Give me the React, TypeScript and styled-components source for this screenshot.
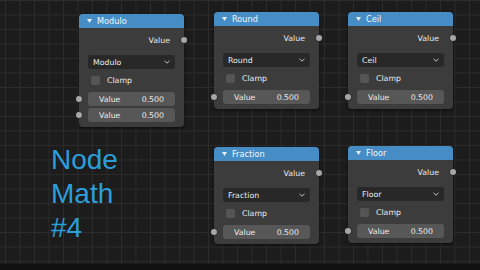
import React from "react";
import styled, { createGlobalStyle } from "styled-components";

const GlobalStyle = createGlobalStyle`
    html, body {
        margin: 0;
        padding: 0;
        background: #111111;
        overflow: hidden;
    }
`

const Screen = styled.div`
    width: 480px;
    height: 270px;
    display: flex;
    flex-direction: column;
    font-family: "DejaVu Sans", "Liberation Sans", sans-serif;
`

const Canvas = styled.div`
    position: relative;
    flex: 1;
    background-color: #1c1c1c;
    background-image:
        linear-gradient(to right, #2b2b2b 1px, transparent 1px),
        linear-gradient(to bottom, #2b2b2b 1px, transparent 1px);
    background-size: 14.5px 14.5px;
    background-position: 5px 0px;
`

const BottomBar = styled.div`
    height: 6px;
    background: #111111;
`

const Title = styled.div`
    position: absolute;
    left: 51px;
    top: 143px;
    font-family: "Liberation Sans", Arial, sans-serif;
    font-size: 28px;
    line-height: 34px;
    color: #2b9fd9;
`

interface NodeBoxProps {
    $x: number;
    $y: number;
}

const NodeBox = styled.div<NodeBoxProps>`
    position: absolute;
    left: ${(p) => p.$x}px;
    top: ${(p) => p.$y}px;
    width: 105px;
    display: flex;
    flex-direction: column;
    background: #3c3c3c;
    border-radius: 4px;
    box-shadow: 0 1px 3px rgba(0, 0, 0, 0.6);
    color: #ececec;
    font-size: 7.8px;
`

const Header = styled.div`
    height: 14px;
    display: flex;
    align-items: center;
    gap: 5px;
    padding-left: 8px;
    background: #478dc5;
    border-radius: 4px 4px 0 0;
    color: #f2f6fa;
    font-size: 8.2px;
`

const Arrow = styled.svg`
    width: 5px;
    height: 4px;
`

const Body = styled.div`
    display: flex;
    flex-direction: column;
    padding: 6px 9px 5px 9px;
`

const OutputRow = styled.div`
    position: relative;
    height: 12px;
    display: flex;
    align-items: center;
    justify-content: flex-end;
    padding-right: 5px;
`

interface SocketProps {
    $side: "left" | "right";
}

const Socket = styled.span<SocketProps>`
    position: absolute;
    top: 50%;
    ${(p) => (p.$side === "left" ? "left: -12px;" : "right: -12px;")}
    width: 6px;
    height: 6px;
    margin-top: -3px;
    border-radius: 50%;
    background: #a6a6a6;
    box-shadow: 0 0 0 0.5px #222;
`

const Dropdown = styled.div`
    margin-top: 9px;
    height: 14px;
    display: flex;
    align-items: center;
    justify-content: space-between;
    padding: 0 5px;
    background: #282828;
    border-radius: 3px;
`

const Chevron = styled.svg`
    width: 6px;
    height: 4px;
`

const CheckRow = styled.div`
    margin-top: 5px;
    height: 12px;
    display: flex;
    align-items: center;
    gap: 7px;
    padding-left: 3px;
`

const CheckBox = styled.span`
    width: 9px;
    height: 9px;
    border-radius: 2px;
    background: #555555;
`

interface FieldProps {
    $first: boolean;
}

const Field = styled.div<FieldProps>`
    position: relative;
    margin-top: ${(p) => (p.$first ? "6px" : "2px")};
    height: 14px;
    display: flex;
    align-items: center;
    justify-content: space-between;
    padding: 0 11px;
    background: #575757;
    border-radius: 3px;
`

interface MathNodeProps {
    name: string;
    x: number;
    y: number;
    inputs: number;
}

const MathNode = (props: MathNodeProps) => {
    let fields = Array.from({ length: props.inputs })
    return (
        <NodeBox $x={props.x} $y={props.y}>
            <Header>
                <Arrow viewBox="0 0 5 4">
                    <path d="M0 0 L5 0 L2.5 4 Z" fill="#e8f0f8" />
                </Arrow>
                <span>{props.name}</span>
            </Header>
            <Body>
                <OutputRow>
                    Value
                    <Socket $side="right" />
                </OutputRow>
                <Dropdown>
                    <span>{props.name}</span>
                    <Chevron viewBox="0 0 6 4">
                        <path d="M0.5 0.8 L3 3.2 L5.5 0.8" fill="none" stroke="#d0d0d0" strokeWidth="0.9" />
                    </Chevron>
                </Dropdown>
                <CheckRow>
                    <CheckBox />
                    <span>Clamp</span>
                </CheckRow>
                {fields.map((_, index) => {
                    return <Field key={index} $first={index === 0}>
                        <Socket $side="left" />
                        <span>Value</span>
                        <span>0.500</span>
                    </Field>
                })}
            </Body>
        </NodeBox>
    )
}

const nodes: MathNodeProps[] = [
    { name: "Modulo", x: 79, y: 14, inputs: 2 },
    { name: "Round", x: 214, y: 12, inputs: 1 },
    { name: "Ceil", x: 348, y: 12, inputs: 1 },
    { name: "Fraction", x: 214, y: 147, inputs: 1 },
    { name: "Floor", x: 348, y: 146, inputs: 1 },
]

const App = () => {
    return (
        <React.Fragment>
            <GlobalStyle />
            <Screen>
                <Canvas>
                    {nodes.map((node) => <MathNode key={node.name} {...node} />)}
                    <Title>
                        Node<br />Math<br />#4
                    </Title>
                </Canvas>
                <BottomBar />
            </Screen>
        </React.Fragment>
    )
}

export default App
